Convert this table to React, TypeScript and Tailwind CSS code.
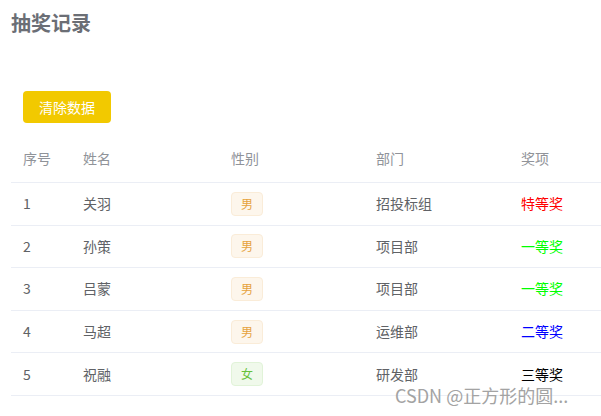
import React from "react";

type Row = { id: number; name: string; sex: "男" | "女"; dept: string; prize: string; color: string };

const rows: Row[] = [
  { id: 1, name: "关羽", sex: "男", dept: "招投标组", prize: "特等奖", color: "text-[#ff0000]" },
  { id: 2, name: "孙策", sex: "男", dept: "项目部", prize: "一等奖", color: "text-[#00ff00]" },
  { id: 3, name: "吕蒙", sex: "男", dept: "项目部", prize: "一等奖", color: "text-[#00ff00]" },
  { id: 4, name: "马超", sex: "男", dept: "运维部", prize: "二等奖", color: "text-[#0000ff]" },
  { id: 5, name: "祝融", sex: "女", dept: "研发部", prize: "三等奖", color: "text-[#000000]" },
];

const font = { fontFamily: '"Noto Sans CJK SC", "Noto Sans", sans-serif' };

export default function App() {
  return (
    <div className="relative w-[601px] h-[416px] bg-white overflow-hidden pl-[11px]" style={font}>
      <div className="pt-[9px] text-[20px] leading-[28px] font-bold text-[#6b6e75]">抽奖记录</div>
      <div className="pl-[12px] pt-[54px]">
        <button className="w-[88px] h-[32px] rounded-[4px] bg-[#f2c900] text-white text-[14px] leading-none">
          清除数据
        </button>
      </div>
      <div className="mt-[11px] text-[14px]">
        <div className="flex h-[49px] items-center border-b border-[#ebeef5] text-[#909399]">
          <div className="w-[60px] pl-[12px]">序号</div>
          <div className="w-[148px] pl-[12px]">姓名</div>
          <div className="w-[145px] pl-[12px]">性别</div>
          <div className="w-[145px] pl-[12px]">部门</div>
          <div className="flex-1 pl-[12px]">奖项</div>
        </div>
        {rows.map((r) => (
          <div key={r.id} className="flex h-[42.6px] items-center border-b border-[#ebeef5] text-[#606266]">
            <div className="w-[60px] pl-[12px]">{r.id}</div>
            <div className="w-[148px] pl-[12px]">{r.name}</div>
            <div className="w-[145px] pl-[12px] flex items-center">
              {r.sex === "男" ? (
                <span className="inline-flex items-center justify-center w-[32px] h-[24px] rounded-[4px] border border-[#faecd8] bg-[#fdf6ec] text-[#e6a23c] text-[12px]">
                  男
                </span>
              ) : (
                <span className="inline-flex items-center justify-center w-[32px] h-[24px] rounded-[4px] border border-[#e1f3d8] bg-[#f0f9eb] text-[#67c23a] text-[12px]">
                  女
                </span>
              )}
            </div>
            <div className="w-[145px] pl-[12px]">{r.dept}</div>
            <div className={"flex-1 pl-[12px] " + r.color}>{r.prize}</div>
          </div>
        ))}
      </div>
      <div className="absolute left-[395px] top-[382px] text-[18px] leading-[26px] text-[#a3a3a3] whitespace-nowrap">
        CSDN @正方形的圆...
      </div>
    </div>
  );
}
